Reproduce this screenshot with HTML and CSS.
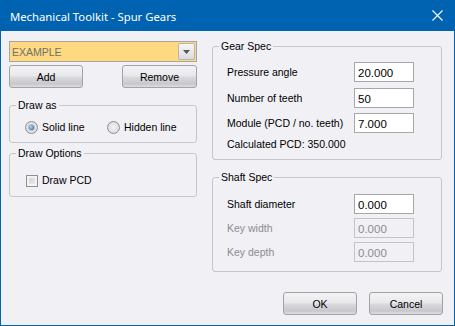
FILE: index.html
```html
<!DOCTYPE html>
<html lang="en">
<head>
    <meta charset="UTF-8">
    <title>Mechanical Toolkit - Spur Gears</title>
    <link rel="stylesheet" href="styles.css">
</head>
<body>
    <div class="window">
        <!-- Title bar -->
        <div class="titlebar">
            <span class="title">Mechanical Toolkit - Spur Gears</span>
            <svg class="close" width="11" height="11" viewBox="0 0 11 11">
                <path d="M0.5 0.5 L10.5 10.5 M10.5 0.5 L0.5 10.5" stroke="#fff" stroke-width="1.1" fill="none"/>
            </svg>
        </div>

        <div class="content">
            <div class="columns">
                <!-- Left column -->
                <div class="left">
                    <div class="combo">
                        <span class="combo-text">EXAMPLE</span>
                        <span class="combo-btn">
                            <svg width="7" height="4" viewBox="0 0 7 4"><path d="M0 0 H7 L3.5 4 Z" fill="#555"/></svg>
                        </span>
                    </div>
                    <div class="btn-row">
                        <button class="btn btn-add">Add</button>
                        <button class="btn btn-remove">Remove</button>
                    </div>

                    <fieldset class="group group-draw">
                        <legend>Draw as</legend>
                        <div class="group-body draw-body">
                            <label class="radio-label solid"><span class="radio checked"></span>Solid line</label>
                            <label class="radio-label"><span class="radio"></span>Hidden line</label>
                        </div>
                    </fieldset>

                    <fieldset class="group group-options">
                        <legend>Draw Options</legend>
                        <div class="group-body options-body">
                            <label class="check-label"><span class="check"></span>Draw PCD</label>
                        </div>
                    </fieldset>
                </div>

                <!-- Right column -->
                <div class="right">
                    <fieldset class="group group-gear">
                        <legend>Gear Spec</legend>
                        <div class="group-body spec-body">
                            <div class="fields gear-fields">
                                <span class="field-label">Pressure angle</span>
                                <input class="field-input" type="text" value="20.000">
                                <span class="field-label">Number of teeth</span>
                                <input class="field-input" type="text" value="50">
                                <span class="field-label">Module (PCD / no. teeth)</span>
                                <input class="field-input" type="text" value="7.000">
                            </div>
                            <div class="calc">Calculated PCD: 350.000</div>
                        </div>
                    </fieldset>

                    <fieldset class="group group-shaft">
                        <legend>Shaft Spec</legend>
                        <div class="group-body spec-body shaft-body">
                            <div class="fields shaft-fields">
                                <span class="field-label">Shaft diameter</span>
                                <input class="field-input" type="text" value="0.000">
                                <span class="field-label disabled">Key width</span>
                                <input class="field-input" type="text" value="0.000" disabled>
                                <span class="field-label disabled">Key depth</span>
                                <input class="field-input" type="text" value="0.000" disabled>
                            </div>
                        </div>
                    </fieldset>
                </div>
            </div>

            <div class="footer">
                <button class="btn btn-ok">OK</button>
                <button class="btn btn-cancel">Cancel</button>
            </div>
        </div>
    </div>
</body>
</html>
```

FILE: styles.css
```css
body {
    margin: 0;
    padding: 0;
    font-family: "Liberation Sans", Arial, sans-serif;
    font-size: 10.5px;
    color: #000;
}

/* Window frame */
.window {
    width: 455px;
    height: 326px;
    box-sizing: border-box;
    border: 1px solid #0063b1;
    border-top: 0;
    background-color: #f0f0f5;
    display: flex;
    flex-direction: column;
}

.titlebar {
    height: 31px;
    flex: none;
    margin: 0 -1px;
    padding: 0 12px 0 10px;
    background-color: #0063b1;
    color: #fff;
    display: flex;
    align-items: center;
    justify-content: space-between;
}

.title {
    font-family: "Noto Sans", "Open Sans", sans-serif;
    font-size: 11.3px;
    padding-top: 1px;
}

.close {
    display: block;
}

.content {
    flex: 1;
    display: flex;
    flex-direction: column;
    padding: 8px 11px 10px 8px;
}

.columns {
    display: flex;
    gap: 15px;
}

.left {
    width: 188px;
    padding-top: 2px;
}

.right {
    width: 230px;
}

/* Combo box */
.combo {
    height: 21px;
    box-sizing: border-box;
    border: 1px solid #a5a5a5;
    background-color: #ffd980;
    display: flex;
    align-items: center;
    padding-left: 2px;
}

.combo-text {
    color: #707070;
    font-size: 10.5px;
}

.combo-btn {
    margin-left: auto;
    margin-right: 1px;
    width: 17px;
    height: 17px;
    box-sizing: border-box;
    border: 1px solid #b5b5b5;
    border-radius: 2px;
    background: linear-gradient(#f7f7f7, #e8e8e8 50%, #dcdcdc);
    display: flex;
    align-items: center;
    justify-content: center;
}

/* Buttons */
.btn-row {
    display: flex;
    justify-content: space-between;
    margin-top: 3px;
}

.btn {
    height: 23px;
    box-sizing: border-box;
    border: 1px solid #a3a3a3;
    border-radius: 3px;
    background: linear-gradient(#f3f3f5, #e9e9ec 45%, #d9d9dd 55%, #c8c8cc 85%, #dedee2);
    font-family: "Liberation Sans", Arial, sans-serif;
    font-size: 10.5px;
    color: #000;
    padding: 0;
}

.btn-add {
    width: 74px;
}

.btn-remove {
    width: 75px;
}

/* Group boxes */
.group {
    margin: 0;
    padding: 0;
    min-width: 0;
    box-sizing: border-box;
    border: 1px solid #c6c6cc;
    border-radius: 3px;
}

.group legend {
    margin-left: 6px;
    padding: 0 2px;
    line-height: 14px;
    font-size: 10.5px;
}

.group-draw {
    margin-top: 10px;
    height: 45px;
}

.draw-body {
    display: flex;
    align-items: center;
    padding: 9px 0 0 15px;
}

.radio-label,
.check-label {
    display: flex;
    align-items: center;
    gap: 4px;
    font-size: 10.5px;
    line-height: 13px;
}

.radio-label.solid {
    width: 82px;
}

.radio {
    width: 13px;
    height: 13px;
    box-sizing: border-box;
    border: 1px solid #8e8f8f;
    border-radius: 50%;
    background: radial-gradient(circle at 50% 50%, #f4f4f4, #d3d3d3);
    display: flex;
    align-items: center;
    justify-content: center;
}

.radio.checked::after {
    content: '';
    width: 5px;
    height: 5px;
    border-radius: 50%;
    background: radial-gradient(circle at 40% 40%, #b9d3ef, #1e4f8c);
    box-shadow: 0 0 0 1px #a7c3e3;
}

.group-options {
    margin-top: 3px;
    height: 51px;
}

.options-body {
    padding: 14px 0 0 16px;
}

.check {
    width: 12px;
    height: 12px;
    box-sizing: border-box;
    border: 1px solid #8e8f8f;
    background: linear-gradient(135deg, #cbcbcb, #f3f3f3);
    box-shadow: inset 0 0 0 2px #f4f4f4;
}

/* Spec fields */
.group-gear {
    height: 121px;
}

.spec-body {
    padding: 9px 0 0 14px;
}

.group-shaft {
    margin-top: 10px;
    height: 102px;
}

.shaft-body {
    padding-top: 10px;
}

.fields {
    display: grid;
    grid-template-columns: 127px 60px;
    align-items: center;
}

.gear-fields {
    row-gap: 5.5px;
}

.shaft-fields {
    row-gap: 4px;
}

.field-label {
    font-size: 10.5px;
}

.field-label.disabled {
    color: #8d8d8d;
}

.field-input {
    width: 60px;
    height: 20px;
    box-sizing: border-box;
    border: 1px solid #a6a6a6;
    padding: 2px 3px 0;
    margin: 0;
    font-family: "Liberation Sans", Arial, sans-serif;
    font-size: 11.5px;
    color: #000;
    background-color: #fff;
}

.field-input:disabled {
    background-color: #f0f0f5;
    border-color: #c4c4c4;
    color: #8d8d8d;
}

.calc {
    margin-top: 4px;
    line-height: 14px;
    font-size: 10.5px;
}

/* Footer */
.footer {
    margin-top: auto;
    display: flex;
    justify-content: flex-end;
    gap: 12px;
}

.btn-ok,
.btn-cancel {
    width: 74px;
}
```
